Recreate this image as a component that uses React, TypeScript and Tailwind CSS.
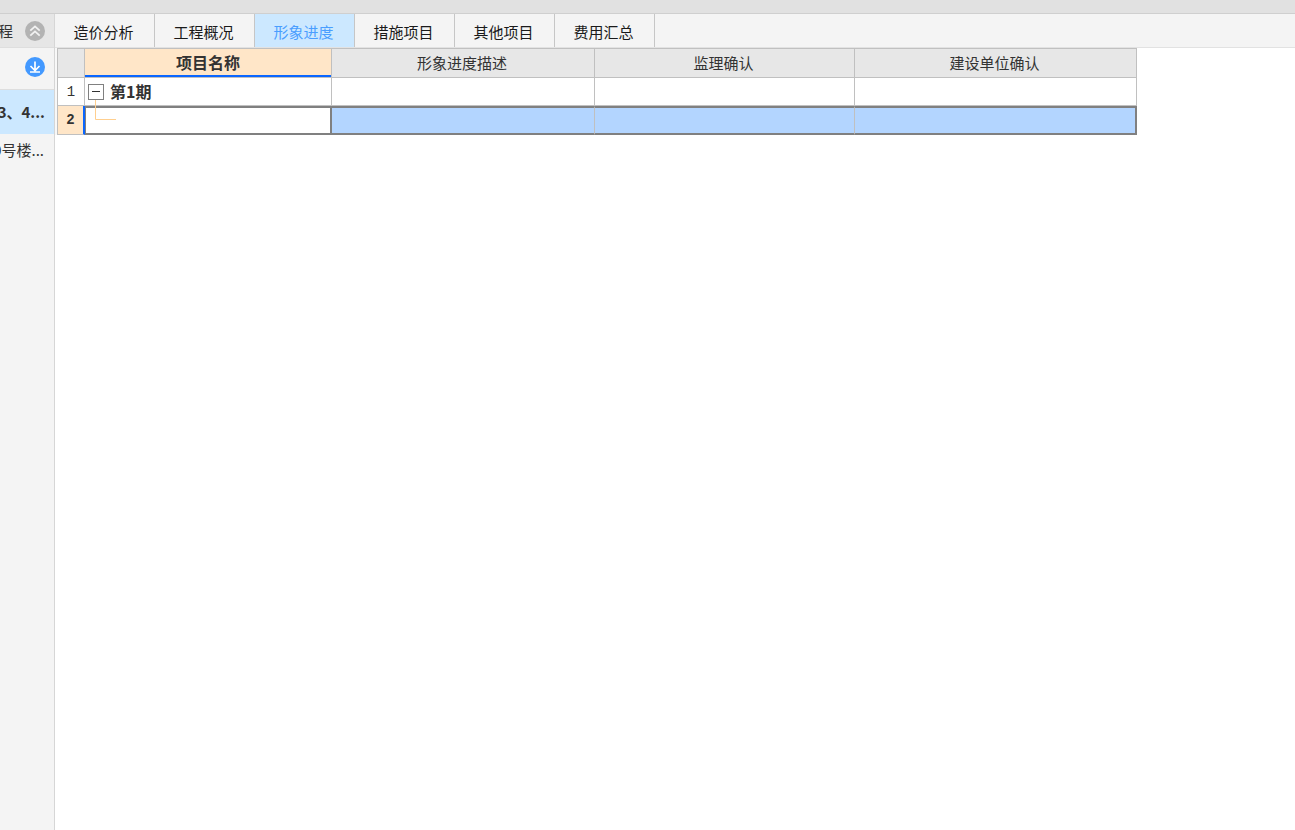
import React, { useState } from "react";

const tabs = ["造价分析", "工程概况", "形象进度", "措施项目", "其他项目", "费用汇总"];

const headers = ["形象进度描述", "监理确认", "建设单位确认"];

function CollapseIcon() {
  return (
    <svg width="20" height="20" viewBox="0 0 20 20" fill="none">
      <circle cx="10" cy="10" r="10" fill="#b3b3b3" />
      <path
        d="M5.3 9.6 10 5.4l4.7 4.2M5.3 14.6l4.7-4.2 4.7 4.2"
        stroke="#f2f2f2"
        strokeWidth="1.8"
      />
    </svg>
  );
}

function DownloadIcon() {
  return (
    <svg width="20" height="20" viewBox="0 0 20 20" fill="none">
      <circle cx="10" cy="10" r="10" fill="#4399ff" />
      <path
        d="M10 4.5v8.5M5.5 9l4.5 4.5L14.5 9M5 15h10"
        stroke="#ffffff"
        strokeWidth="1.7"
      />
    </svg>
  );
}

function Sidebar() {
  return (
    <aside className="w-[55px] shrink-0 overflow-hidden border-r border-[#d6d6d6] bg-[#f4f4f4] text-[15px] leading-5 text-[#333]">
      <div className="flex h-[34px] items-center justify-end gap-3 border-b border-[#dedede] bg-[#e6e6e6] pr-[9px]">
        <span className="whitespace-nowrap">程</span>
        <button type="button" aria-label="收起" className="shrink-0">
          <CollapseIcon />
        </button>
      </div>
      <div className="flex h-[42px] items-center justify-end border-b border-[#dedede] pr-[9px] pb-1">
        <button type="button" aria-label="下载" className="shrink-0">
          <DownloadIcon />
        </button>
      </div>
      <button
        type="button"
        className="flex h-11 w-full items-center justify-end bg-[#cce8ff] pr-[9px] font-bold whitespace-nowrap"
      >
        3、4...
      </button>
      <button
        type="button"
        className="flex h-8 w-full items-center justify-end pr-[10px] whitespace-nowrap"
      >
        9号楼...
      </button>
    </aside>
  );
}

export default function App() {
  const [activeTab, setActiveTab] = useState("形象进度");

  return (
    <div className="flex min-h-screen flex-col bg-white font-['Noto_Sans_CJK_SC',sans-serif]">
      <header className="h-[14px] border-b border-[#cfcfcf] bg-[#e1e1e1]" />

      <div className="flex flex-1">
        <Sidebar />

        <main className="min-w-0 flex-1">
          <nav className="flex h-[34px] border-b border-[#e2e2e2] bg-[#f4f4f4]">
            {tabs.map((tab) => (
              <button
                key={tab}
                type="button"
                onClick={() => setActiveTab(tab)}
                className={`w-[100px] border-r border-[#c6c6c6] pt-[2px] pr-[2px] text-[15px] leading-5 ${activeTab === tab ? "bg-[#cce8ff] text-[#4a9eff]" : "text-[#1a1a1a]"}`}
              >
                {tab}
              </button>
            ))}
          </nav>

          <div className="border-l-2 border-[#f8f8f8]">
            <table className="w-[1080px] table-fixed border-separate border-spacing-0 border-t border-l border-[#c0c0c0] text-[15px] leading-5 text-[#333]">
              <colgroup>
                <col className="w-[27px]" />
                <col className="w-[247px]" />
                <col className="w-[263px]" />
                <col className="w-[260px]" />
                <col className="w-[282px]" />
              </colgroup>
              <thead>
                <tr className="h-[29px]">
                  <td className="border-r border-b border-[#c0c0c0] bg-[#e7e7e7] p-0" />
                  <th className="border-r border-b border-[#c0c0c0] bg-[#ffe6c8] p-0 pb-[2px] text-base leading-5 font-bold shadow-[inset_0_-2px_0_#0a66ff]">
                    项目名称
                  </th>
                  {headers.map((header) => (
                    <th
                      key={header}
                      className="border-r border-b border-[#c0c0c0] bg-[#e7e7e7] p-0 pr-[2px] font-normal"
                    >
                      {header}
                    </th>
                  ))}
                </tr>
              </thead>
              <tbody>
                <tr className="h-7">
                  <td className="border-r border-b border-[#c0c0c0] p-0 text-center font-['Liberation_Mono',monospace] text-sm leading-5">
                    1
                  </td>
                  <td className="border-r border-b border-[#c0c0c0] p-0">
                    <div className="flex items-center gap-[6px] pl-[3px] text-base leading-5 font-bold">
                      <button
                        type="button"
                        aria-label="折叠"
                        className="flex size-4 items-center justify-center border border-[#808080] bg-white"
                      >
                        <span className="h-px w-2 bg-[#333]" />
                      </button>
                      <span className="pb-[2px]">第1期</span>
                    </div>
                  </td>
                  <td className="border-r border-b border-[#c0c0c0] p-0" />
                  <td className="border-r border-b border-[#c0c0c0] p-0" />
                  <td className="border-r border-b border-[#c0c0c0] p-0" />
                </tr>
                <tr className="h-[29px]">
                  <td className="border-r-2 border-b border-r-[#0a66ff] border-b-[#c0c0c0] bg-[#ffe6c8] p-0 text-center font-['Liberation_Mono',monospace] text-sm leading-5 font-bold">
                    2
                  </td>
                  <td className="border-y-2 border-r-2 border-l border-[#808080] bg-white p-0">
                    {/* tree branch down from the parent row */}
                    <svg
                      width="32"
                      height="25"
                      viewBox="0 0 32 25"
                      fill="none"
                      className="block overflow-visible"
                    >
                      <path d="M9.5 -8V11.5H30" stroke="#ffcf8f" />
                    </svg>
                  </td>
                  <td className="border-y-2 border-r border-y-[#808080] border-r-[#c0c0c0] bg-[#b3d5ff] p-0" />
                  <td className="border-y-2 border-r border-y-[#808080] border-r-[#c0c0c0] bg-[#b3d5ff] p-0" />
                  <td className="border-y-2 border-r-2 border-[#808080] bg-[#b3d5ff] p-0" />
                </tr>
              </tbody>
            </table>
          </div>
        </main>
      </div>
    </div>
  );
}
